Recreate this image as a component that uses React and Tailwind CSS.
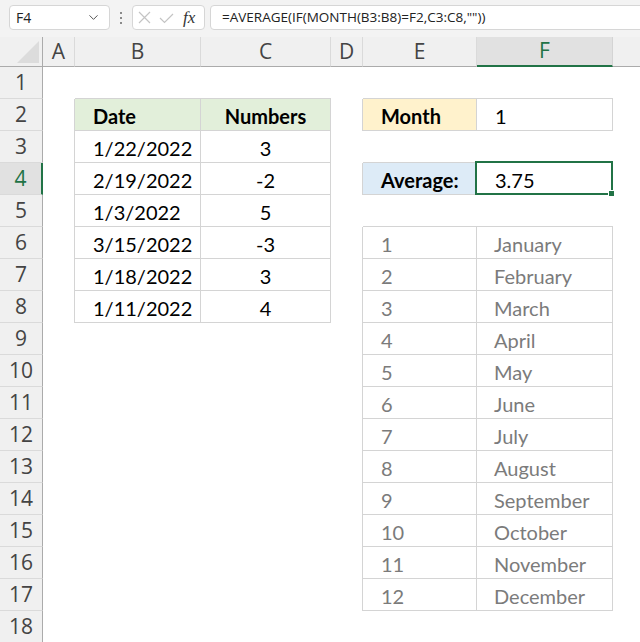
import { ChevronDown } from "lucide-react";

const table1 = [
  ["Date", "Numbers"],
  ["1/22/2022", "3"],
  ["2/19/2022", "-2"],
  ["1/3/2022", "5"],
  ["3/15/2022", "-3"],
  ["1/18/2022", "3"],
  ["1/11/2022", "4"],
];

const months = [
  "January", "February", "March", "April", "May", "June",
  "July", "August", "September", "October", "November", "December",
];

const letters = ["A", "B", "C", "D", "E", "F", ""];

// builds the look of one body cell, r = sheet row, c = 1..7 (A..F, rest)
const getCell = (r, c) => {
  let cls = "";
  let text = "";

  // left table B2:C8
  if ((c === 2 || c === 3) && r >= 2 && r <= 8) {
    cls += " border-r border-b border-[#d4d4d4] text-black";
    text = table1[r - 2][c - 2];
    if (r === 2) cls += " bg-[#e2efda] font-bold";
    cls += c === 2 ? " pl-[18px]" : " justify-center";
  }
  if (c === 1 && r >= 2 && r <= 8) cls += " border-r border-[#d4d4d4]";
  if ((c === 2 || c === 3) && r === 1) cls += " border-b border-[#d4d4d4]";

  // right side E/F
  const rightRow = r === 2 || r === 4 || (r >= 6 && r <= 17);
  if ((c === 5 || c === 6) && rightRow) {
    cls += " border-r border-b border-[#d4d4d4]";
    if (r === 2) {
      text = c === 5 ? "Month" : "1";
      cls += c === 5 ? " bg-[#fff2cc] font-bold pl-[18px] text-black" : " pl-[18px] text-black";
    } else if (r === 4) {
      text = c === 5 ? "Average:" : "3.75";
      cls += c === 5 ? " bg-[#ddebf7] font-bold pl-[18px] text-black" : " pl-[18px] text-black";
    } else {
      text = c === 5 ? String(r - 5) : months[r - 6];
      cls += c === 5 ? " pl-[18px] text-[#7b7b7b]" : " pl-[17px] text-[#7b7b7b]";
    }
  }
  if (c === 4 && rightRow) cls += " border-r border-[#d4d4d4]";
  if ((c === 5 || c === 6) && (r === 1 || r === 3 || r === 5)) cls += " border-b border-[#d4d4d4]";

  return { cls, text };
};

const App = () => {
  const rows = Array.from({ length: 18 }, (_, i) => i + 1);

  return (
    <div className="w-[640px] h-[642px] overflow-hidden bg-white font-['Lato','Liberation_Sans',sans-serif]">
      {/* TOOLBAR */}
      <div className="h-[37px] bg-[#f3f3f3] flex items-start pt-[5px] pl-[9px] font-['Open_Sans','Noto_Sans',sans-serif]">
        <div className="w-[101px] h-[25px] bg-white border border-[#d6d6d6] rounded-[4px] flex items-center justify-between pl-[6px] pr-[8px] text-[14px] text-[#222]">
          <span>F4</span>
          <ChevronDown size={15} strokeWidth={1.6} className="text-[#555]" />
        </div>
        <div className="w-[22px] h-[25px] flex flex-col items-center justify-center gap-[3px]">
          <span className="w-[2px] h-[2px] bg-[#8a8a8a]" />
          <span className="w-[2px] h-[2px] bg-[#8a8a8a]" />
          <span className="w-[2px] h-[2px] bg-[#8a8a8a]" />
        </div>
        <div className="w-[73px] h-[25px] bg-white border border-[#d6d6d6] rounded-[4px] flex items-center pl-[5px]">
          <svg width="13" height="13" viewBox="0 0 13 13">
            <path d="M1 1L12 12M12 1L1 12" stroke="#c4c4c4" strokeWidth="1.2" fill="none" />
          </svg>
          <svg width="15" height="12" viewBox="0 0 15 12" className="ml-[8px]">
            <path d="M1 6L5.5 10.5L14 2" stroke="#c4c4c4" strokeWidth="1.2" fill="none" />
          </svg>
          <span className="ml-[9px] italic text-[17px] text-[#333] font-['Liberation_Serif',serif] leading-none">fx</span>
        </div>
        <div className="ml-[5px] flex-1 -mr-[12px] h-[25px] bg-white border border-[#d6d6d6] rounded-[4px] flex items-center pl-[11px] text-[13.5px] text-[#222] whitespace-nowrap">
          =AVERAGE(IF(MONTH(B3:B8)=F2,C3:C8,""))
        </div>
      </div>

      {/* SHEET */}
      <div className="grid grid-cols-[43px_32px_126px_130px_32px_114px_136px_27px] grid-rows-[30px] auto-rows-[32px]">
        {/* column headers */}
        <div className="bg-[#f0f0f0] border-r border-b border-[#ababab] flex items-end justify-end pr-[3px] pb-[3px]">
          <svg width="22" height="22" viewBox="0 0 22 22">
            <path d="M22 0L22 22L0 22Z" fill="#dcdcdc" />
          </svg>
        </div>
        {letters.map((l, i) => (
          <div
            key={i}
            className={
              "flex items-center justify-center text-[21px] font-['Open_Sans','Noto_Sans',sans-serif] " +
              (l === "F"
                ? "bg-[#e1e1e1] text-[#217346] border-r border-[#d4d4d4] border-b-2 border-b-[#217346]"
                : "bg-[#f0f0f0] text-[#444] border-b border-b-[#ababab] " + (i < 6 ? "border-r border-r-[#dadada]" : ""))
            }
          >
            {l}
          </div>
        ))}

        {rows.map((r) => [
          <div
            key={`h${r}`}
            className={
              "flex items-center justify-center text-[21px] font-['Open_Sans','Noto_Sans',sans-serif] border-b border-b-[#dadada] " +
              (r === 4
                ? "bg-[#e1e1e1] text-[#217346] border-r-2 border-r-[#217346]"
                : "bg-[#f0f0f0] text-[#444] border-r border-r-[#ababab]")
            }
          >
            {r}
          </div>,
          ...[1, 2, 3, 4, 5, 6, 7].map((c) => {
            const { cls, text } = getCell(r, c);
            const selected = r === 4 && c === 6;
            return (
              <div key={`${r}-${c}`} className={"relative flex items-center pt-[3px] text-[20px] whitespace-nowrap" + cls}>
                {text}
                {selected && (
                  <div className="absolute -left-[2px] -top-[2px] -right-[1px] -bottom-[1px] border-2 border-[#217346] z-10">
                    <div className="absolute -right-[4px] -bottom-[4px] w-[7px] h-[7px] bg-[#217346] border border-white" />
                  </div>
                )}
              </div>
            );
          }),
        ])}
      </div>
    </div>
  );
};

export default App;
